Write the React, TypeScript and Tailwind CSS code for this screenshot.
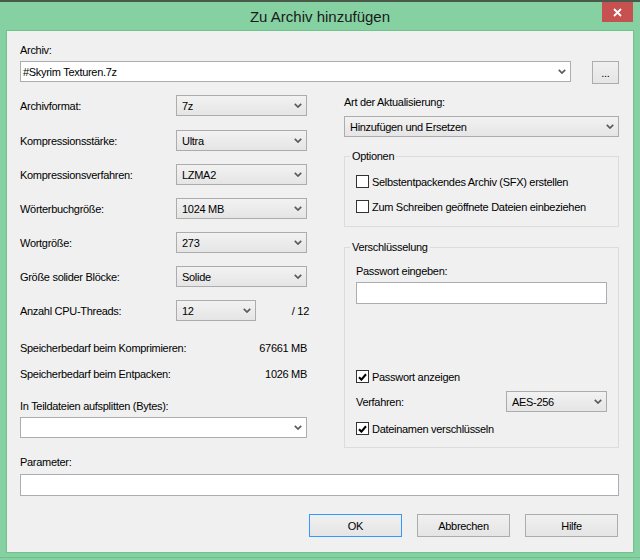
import React from "react";

const Chevron = () => (
  <svg width="8" height="5" viewBox="0 0 8 5" className="shrink-0">
    <path d="M0.8 0.8 L4 4 L7.2 0.8" fill="none" stroke="#5a5a5a" strokeWidth="1.7" />
  </svg>
);

// read-only dropdown list (grey gradient face)
const Select = ({ value, className = "" }: { value: string; className?: string }) => (
  <div
    className={`h-[21px] flex items-center justify-between pl-[5px] pr-[4px] border border-[#acacac] bg-linear-to-b from-[#f2f2f2] to-[#e5e5e5] ${className}`}
  >
    <span>{value}</span>
    <Chevron />
  </div>
);

// editable combobox (white)
const Combo = ({ value = "", className = "" }: { value?: string; className?: string }) => (
  <div
    className={`h-[21px] flex items-center justify-between pl-[2px] pr-[4px] border border-[#abadb3] bg-white ${className}`}
  >
    <span>{value}</span>
    <Chevron />
  </div>
);

const Checkbox = ({ checked, label }: { checked?: boolean; label: string }) => (
  <div className="flex items-center h-[13px]">
    <div className="w-[13px] h-[13px] border border-[#333333] bg-white flex items-center justify-center shrink-0">
      {checked && (
        <svg width="9" height="8" viewBox="0 0 9 8">
          <path d="M1 4.2 L3.4 6.6 L8 1.2" fill="none" stroke="#000" strokeWidth="2.1" />
        </svg>
      )}
    </div>
    <span className="ml-[3px]">{label}</span>
  </div>
);

const Button = ({ label, primary }: { label: string; primary?: boolean }) => (
  <div
    className={`w-[93px] h-[23px] flex items-center justify-center border ${
      primary ? "border-[#3399ff]" : "border-[#acacac]"
    } bg-linear-to-b from-[#f0f0f0] to-[#e5e5e5]`}
  >
    {label}
  </div>
);

const leftRows = [
  { label: "Archivformat:", value: "7z" },
  { label: "Kompressionsstärke:", value: "Ultra" },
  { label: "Kompressionsverfahren:", value: "LZMA2" },
  { label: "Wörterbuchgröße:", value: "1024 MB" },
  { label: "Wortgröße:", value: "273" },
  { label: "Größe solider Blöcke:", value: "Solide" },
];

const App = () => {
  return (
    <div className="w-[640px] h-[560px] bg-[#85d1a1] flex flex-col font-['Liberation_Sans',Arial,sans-serif] text-[11px] tracking-[-0.3px] text-black leading-[14px]">
      {/* title bar */}
      <div className="h-[2px] bg-[#4a5a4a]" />
      <div className="h-[28px] grid grid-cols-[1fr_auto_1fr] items-start">
        <div />
        <div className="text-[15px] tracking-normal text-[#1a1a1a] leading-[18px] pt-[6px]">Zu Archiv hinzufügen</div>
        <div className="flex justify-end pr-[7px]">
          <div className="w-[31px] h-[20px] bg-[#c75050] flex items-center justify-center">
            <svg width="9" height="9" viewBox="0 0 9 9">
              <path d="M1 1 L8 8 M8 1 L1 8" stroke="#fff" strokeWidth="1.8" />
            </svg>
          </div>
        </div>
      </div>

      {/* client area */}
      <div className="mx-[6px] h-[523px] border border-[#72c28d] bg-[#f0f0f0] pl-[13px] pr-[14px] pt-[12px] flex flex-col">
        <div>Archiv:</div>
        <div className="mt-[4px] flex items-start gap-[21px]">
          <Combo value="#Skyrim Texturen.7z" className="w-[551px]" />
          <div className="w-[27px] h-[23px] border border-[#acacac] bg-linear-to-b from-[#f0f0f0] to-[#e5e5e5] flex items-center justify-center">
            ...
          </div>
        </div>

        <div className="mt-[11px] h-[353px] flex gap-[37px]">
          {/* left column */}
          <div className="w-[287px] flex flex-col">
            <div className="flex flex-col gap-[13px]">
              {leftRows.map((r, i) => (
                <div key={r.label} className={`flex items-center ${i === 0 ? "mb-[1px]" : ""}`}>
                  <div className="w-[156px]">{r.label}</div>
                  <Select value={r.value} className="flex-1" />
                </div>
              ))}
              <div className="flex items-center">
                <div className="w-[156px]">Anzahl CPU-Threads:</div>
                <Select value="12" className="w-[80px]" />
                <div className="flex-1 text-right -mr-[2px]">/ 12</div>
              </div>
            </div>
            <div className="mt-[20px] flex justify-between">
              <span>Speicherbedarf beim Komprimieren:</span>
              <span>67661 MB</span>
            </div>
            <div className="mt-[12px] flex justify-between">
              <span>Speicherbedarf beim Entpacken:</span>
              <span>1026 MB</span>
            </div>
            <div className="mt-[18px]">In Teildateien aufsplitten (Bytes):</div>
            <Combo className="mt-[4px]" />
          </div>

          {/* right column */}
          <div className="w-[275px] flex flex-col">
            <div>Art der Aktualisierung:</div>
            <Select value="Hinzufügen und Ersetzen" className="mt-[7px]" />

            <fieldset className="mt-[12px] border border-[#dcdcdc] px-[11px] pt-[12px] pb-[13px]">
              <legend className="-ml-[6px] px-[2px]">Optionen</legend>
              <div className="flex flex-col gap-[12px]">
                <Checkbox label="Selbstentpackendes Archiv (SFX) erstellen" />
                <Checkbox label="Zum Schreiben geöffnete Dateien einbeziehen" />
              </div>
            </fieldset>

            <fieldset className="mt-[13px] border border-[#dcdcdc] px-[11px] pt-[10px] pb-[12px]">
              <legend className="-ml-[6px] px-[2px]">Verschlüsselung</legend>
              <div>Passwort eingeben:</div>
              <div className="mt-[4px] h-[22px] border border-[#abadb3] bg-white" />
              <div className="mt-[66px]">
                <Checkbox checked label="Passwort anzeigen" />
              </div>
              <div className="mt-[8px] flex items-center justify-between">
                <span>Verfahren:</span>
                <Select value="AES-256" className="w-[101px]" />
              </div>
              <div className="mt-[10px]">
                <Checkbox checked label="Dateinamen verschlüsseln" />
              </div>
            </fieldset>
          </div>
        </div>

        <div className="mt-[7px]">Parameter:</div>
        <div className="mt-[5px] h-[22px] border border-[#abadb3] bg-white" />

        <div className="mt-[18px] flex justify-end gap-[15px] pr-[1px]">
          <Button label="OK" primary />
          <Button label="Abbrechen" />
          <Button label="Hilfe" />
        </div>
      </div>

      {/* bottom frame */}
      <div className="h-[7px] flex flex-col">
        <div className="h-[4px]" />
        <div className="h-[1px] bg-[#70bf8b]" />
      </div>
    </div>
  );
};

export default App;
